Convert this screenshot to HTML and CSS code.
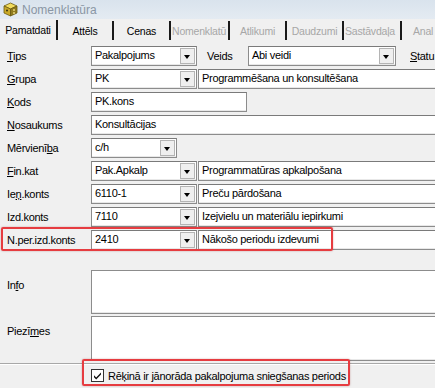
FILE: index.html
```html
<!DOCTYPE html>
<html lang="lv">
<head>
<meta charset="UTF-8" />
<title>Nomenklatūra</title>
<link rel="stylesheet" href="styles.css">
</head>
<body>
<div class="window">
  <div class="titlebar">
    <svg class="appIcon" width="15" height="15" viewBox="0 0 15 15">
      <polygon points="7.5,1 14,4 7.5,7 1,4" fill="#f2dc5c" stroke="#6b5a12" stroke-width="0.8"/>
      <polygon points="1,4 7.5,7 7.5,14 1,11" fill="#c9a928" stroke="#6b5a12" stroke-width="0.8"/>
      <polygon points="14,4 7.5,7 7.5,14 14,11" fill="#8f7a1c" stroke="#6b5a12" stroke-width="0.8"/>
      <circle cx="4" cy="8.5" r="1" fill="#3b3310"/>
      <circle cx="11" cy="8" r="1" fill="#e9d67a"/>
      <circle cx="11" cy="11" r="1" fill="#e9d67a"/>
    </svg>
    <span class="titleText">Nomenklatūra</span>
  </div>

  <div class="tabs">
    <div class="tab active t58">Pamatdati</div>
    <div class="tab t56">Attēls</div>
    <div class="tab t57">Cenas</div>
    <div class="tab disabled t59 left">Nomenklatū</div>
    <div class="tab disabled t57">Atlikumi</div>
    <div class="tab disabled t57">Daudzumi</div>
    <div class="tab disabled t58 left">Sastāvdaļa</div>
    <div class="tab disabled last">Anal</div>
  </div>

  <div class="page">
    <div class="row">
      <label class="lbl"><u>T</u>ips</label>
      <div class="combo w106"><span class="val">Pakalpojums</span><span class="ddBtn"></span></div>
      <label class="lbl2">Veids</label>
      <div class="combo w148"><span class="val">Abi veidi</span><span class="ddBtn"></span></div>
      <label class="lbl3"><u>S</u>tatu</label>
    </div>
    <div class="row">
      <label class="lbl"><u>G</u>rupa</label>
      <div class="combo w106"><span class="val">PK</span><span class="ddBtn"></span></div>
      <div class="field grow">Programmēšana un konsultēšana</div>
    </div>
    <div class="row">
      <label class="lbl"><u>K</u>ods</label>
      <div class="field w156">PK.kons</div>
    </div>
    <div class="row">
      <label class="lbl"><u>N</u>osaukums</label>
      <div class="field growFull">Konsultācijas</div>
    </div>
    <div class="row">
      <label class="lbl">Mērvienī<u>b</u>a</label>
      <div class="combo w86"><span class="val">c/h</span><span class="ddBtn"></span></div>
    </div>
    <div class="row">
      <label class="lbl"><u>F</u>in.kat</label>
      <div class="combo w106"><span class="val">Pak.Apkalp</span><span class="ddBtn"></span></div>
      <div class="field grow">Programmatūras apkalpošana</div>
    </div>
    <div class="row">
      <label class="lbl">Ie<u>ņ</u>.konts</label>
      <div class="combo w106"><span class="val">6110-1</span><span class="ddBtn"></span></div>
      <div class="field grow">Preču pārdošana</div>
    </div>
    <div class="row">
      <label class="lbl">Izd.konts</label>
      <div class="combo w106"><span class="val">7110</span><span class="ddBtn"></span></div>
      <div class="field grow">Izejvielu un materiālu iepirkumi</div>
    </div>
    <div class="row">
      <label class="lbl">N.per.izd.konts</label>
      <div class="combo w106"><span class="val">2410</span><span class="ddBtn"></span></div>
      <div class="field grow">Nākošo periodu izdevumi</div>
    </div>

    <div class="memoRow first">
      <label class="lbl memoLbl">In<u>f</u>o</label>
      <div class="memo h44"></div>
    </div>
    <div class="memoRow">
      <label class="lbl memoLbl">Piezī<u>m</u>es</label>
      <div class="memo h45"></div>
    </div>

    <div class="checkRow">
      <span class="checkBox">
        <svg width="13" height="13" viewBox="0 0 13 13">
          <rect x="0.5" y="0.5" width="12" height="12" fill="#fff" stroke="#333"/>
          <path d="M3 6.2 L5.2 8.6 L10 3.6 L10 5.6 L5.2 10.6 L3 8.2 Z" fill="#111"/>
        </svg>
      </span>
      <span class="checkText">Rēķinā ir jānorāda pakalpojuma sniegšanas periods</span>
    </div>
  </div>

  <div class="mark markRow"></div>
  <div class="mark markCheck"></div>
</div>
</body>
</html>
```

FILE: styles.css
```css
body {
  margin: 0;
  background: #f0f0f0;
  font-family: "Liberation Sans", Arial, sans-serif;
  font-size: 10px;
  color: #000;
  overflow: hidden;
}

.window {
  position: relative;
  width: 435px;
  height: 388px;
  overflow: hidden;
  background: #f0f0f0;
}

/* title bar */
.titlebar {
  height: 19px;
  display: flex;
  align-items: center;
  padding-left: 3px;
  background: linear-gradient(#d9e3ed, #e4ebf2);
}
.appIcon { margin-right: 4px; }
.titleText {
  font-size: 12px;
  color: #8a96a4;
}

/* tabs */
.tabs {
  display: flex;
  height: 21px;
  margin-top: 1px;
}
.tab {
  box-sizing: border-box;
  text-align: center;
  white-space: nowrap;
  overflow: hidden;
  font-size: 10.5px;
  letter-spacing: -0.2px;
  line-height: 20px;
  border-right: 2px solid #1a1a1a;
  margin-top: 1px;
  height: 19px;
}
.tab.active { margin-top: 0; height: 20px; }
.tab.disabled { color: #a7a7a7; }
.tab.left { text-align: left; padding-left: 1px; }
.tab.last { flex: 1; text-align: left; padding-left: 11px; border-right: none; }
.t56 { flex: 0 0 56px; }
.t57 { flex: 0 0 57px; }
.t58 { flex: 0 0 58px; }
.t59 { flex: 0 0 59px; }

/* form */
.page {
  padding-top: 5px;
}
.row {
  display: flex;
  align-items: center;
  height: 20px;
  margin-bottom: 3px;
}
.lbl {
  width: 91px;
  flex: 0 0 91px;
  box-sizing: border-box;
  padding-left: 7px;
  font-size: 11px;
  letter-spacing: -0.3px;
  white-space: nowrap;
}
.lbl2 {
  flex: 0 0 41px;
  margin-left: 10px;
  font-size: 11px;
  letter-spacing: -0.3px;
}
.lbl3 {
  flex-shrink: 0;
  margin-left: 14px;
  font-size: 11px;
  white-space: nowrap;
  letter-spacing: -0.3px;
}

.field, .combo {
  height: 20px;
  box-sizing: border-box;
  background: #fff;
  border: 1px solid #8c8c8c;
  border-top-color: #7a7a7a;
  box-shadow: inset 0 -1px 0 #e8e8e8;
  font-size: 11px;
  letter-spacing: -0.3px;
  white-space: nowrap;
  overflow: hidden;
}
.field {
  padding-left: 3px;
  line-height: 17px;
}
.combo {
  display: flex;
  align-items: stretch;
  flex-shrink: 0;
}
.combo .val {
  flex: 1;
  padding-left: 3px;
  line-height: 17px;
}
.ddBtn {
  position: relative;
  width: 13px;
  margin: 1px;
  border: 1px solid #b4b4b4;
  background: #efefef;
}
.ddBtn::after {
  content: "";
  position: absolute;
  left: 3px;
  top: 6px;
  border-left: 3.5px solid transparent;
  border-right: 3.5px solid transparent;
  border-top: 4px solid #000;
}
.w86 { width: 86px; }
.w106 { width: 106px; }
.w148 { width: 148px; }
.w156 { width: 156px; flex-shrink: 0; }
.grow {
  flex: 1;
  margin-left: 1px;
  margin-right: -4px;
}
.growFull {
  flex: 1;
  margin-right: -4px;
}

.memoRow {
  display: flex;
  margin-bottom: 2px;
}
.memoRow.first { margin-top: 20px; }
.memoLbl { padding-top: 9px; }
.memo {
  flex: 1;
  margin-right: -4px;
  background: #fff;
  border: 1px solid #8c8c8c;
  box-shadow: inset 0 -1px 0 #e8e8e8;
}
.h44 { height: 42px; }
.h45 { height: 43px; }

.checkRow {
  display: flex;
  align-items: center;
  height: 23px;
  border-top: 1px solid #a8a8a8;
  box-shadow: inset 0 1px 0 #fff;
  padding-left: 91px;
}
.checkBox { display: flex; margin-right: 4px; }
.checkText {
  font-size: 11px;
  letter-spacing: -0.3px;
  white-space: nowrap;
}

/* red annotation boxes */
.mark {
  position: absolute;
  border: 2px solid #e63c40;
  border-radius: 2px;
  box-shadow: 0 0 2px rgba(120, 0, 0, 0.35);
}
.markRow { left: 1px; top: 227px; width: 328px; height: 20px; }
.markCheck { left: 82px; top: 359px; width: 264px; height: 23px; }
```
